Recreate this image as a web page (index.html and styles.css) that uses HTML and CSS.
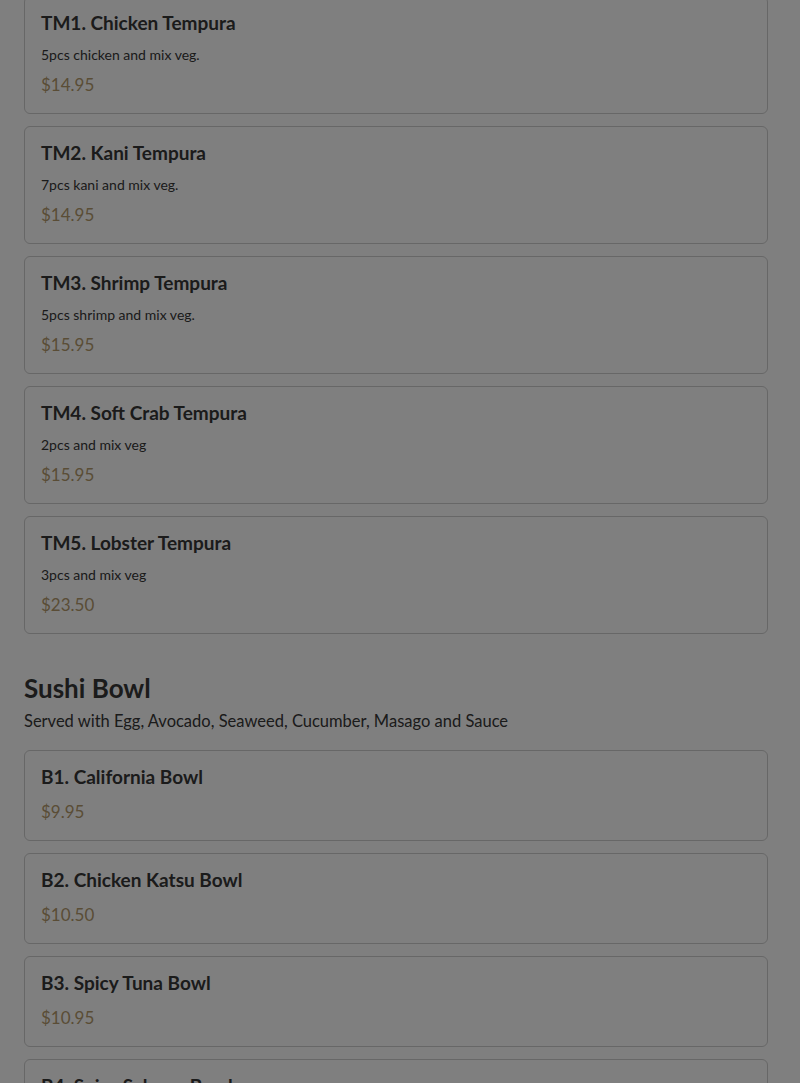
FILE: index.html
```html
<!DOCTYPE html>
<html lang="en">
<head>
<meta charset="utf-8">
<title>Menu</title>
<link rel="stylesheet" href="styles.css">
</head>
<body>
<main class="menu">
  <section class="section first">
    <div class="items">
      <article class="item">
        <h3 class="item-name">TM1. Chicken Tempura</h3>
        <p class="item-desc">5pcs chicken and mix veg.</p>
        <p class="item-price">$14.95</p>
      </article>
      <article class="item">
        <h3 class="item-name">TM2. Kani Tempura</h3>
        <p class="item-desc">7pcs kani and mix veg.</p>
        <p class="item-price">$14.95</p>
      </article>
      <article class="item">
        <h3 class="item-name">TM3. Shrimp Tempura</h3>
        <p class="item-desc">5pcs shrimp and mix veg.</p>
        <p class="item-price">$15.95</p>
      </article>
      <article class="item">
        <h3 class="item-name">TM4. Soft Crab Tempura</h3>
        <p class="item-desc">2pcs and mix veg</p>
        <p class="item-price">$15.95</p>
      </article>
      <article class="item">
        <h3 class="item-name">TM5. Lobster Tempura</h3>
        <p class="item-desc">3pcs and mix veg</p>
        <p class="item-price">$23.50</p>
      </article>
    </div>
  </section>
  <section class="section">
    <h2 class="section-title">Sushi Bowl</h2>
    <p class="section-desc">Served with Egg, Avocado, Seaweed, Cucumber, Masago and Sauce</p>
    <div class="items">
      <article class="item">
        <h3 class="item-name">B1. California Bowl</h3>
        <p class="item-price">$9.95</p>
      </article>
      <article class="item">
        <h3 class="item-name">B2. Chicken Katsu Bowl</h3>
        <p class="item-price">$10.50</p>
      </article>
      <article class="item">
        <h3 class="item-name">B3. Spicy Tuna Bowl</h3>
        <p class="item-price">$10.95</p>
      </article>
      <article class="item">
        <h3 class="item-name">B4. Spicy Salmon Bowl</h3>
        <p class="item-price">$11.95</p>
      </article>
    </div>
  </section>
</main>
<div class="backdrop"></div>
</body>
</html>
```
FILE: styles.css
```css
* { box-sizing: border-box; }
html, body {
  margin: 0;
  padding: 0;
  background: #ffffff;
  font-family: Lato, "Open Sans", sans-serif;
  color: #363636;
  overflow: hidden;
}
.menu {
  padding: 0 32px 0 24px;
}
.section.first {
  margin-top: -4px;
}
.items {
  display: flex;
  flex-direction: column;
  gap: 12px;
}
.item {
  border: 1px solid #cecece;
  border-radius: 6px;
  padding: 15px 16px 16px;
  background: #ffffff;
}
.item-name {
  margin: 0;
  font-size: 19px;
  line-height: 22px;
  font-weight: 700;
  color: #363636;
}
.item-desc {
  margin: 11px 0 0;
  font-size: 14px;
  line-height: 20px;
  color: #363636;
}
.item-price {
  margin: 8px 0 0;
  font-size: 17px;
  line-height: 24px;
  color: #b49a6c;
}
.item-name + .item-price {
  margin-top: 12px;
}
.section-title {
  margin: 38px 0 0;
  font-size: 26px;
  line-height: 32px;
  font-weight: 700;
  color: #363636;
}
.section-desc {
  margin: 5px 0 17px;
  font-size: 16.5px;
  line-height: 24px;
  color: #363636;
}
.backdrop {
  position: fixed;
  inset: 0;
  background: rgba(0, 0, 0, 0.5);
}
```
